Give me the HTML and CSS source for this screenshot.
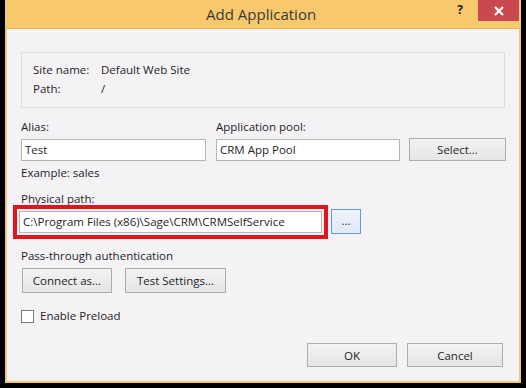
FILE: index.html
```html
<!DOCTYPE html>
<html lang="en">
<head>
<meta charset="UTF-8">
<title>Add Application</title>
<link rel="stylesheet" href="styles.css">
</head>
<body>
<div class="window">
  <!-- Title Bar -->
  <div class="titlebar">
    <span class="title">Add Application</span>
    <span class="help">?</span>
    <span class="close">
      <svg width="12" height="10" viewBox="0 0 12 10"><path d="M2 1 L10 9 M10 1 L2 9" stroke="#fff" stroke-width="2.2"/></svg>
    </span>
  </div>

  <div class="content">
    <!-- Site Info -->
    <div class="site-box">
      <div class="site-row"><span class="key">Site name:</span><span>Default Web Site</span></div>
      <div class="site-row"><span class="key">Path:</span><span>/</span></div>
    </div>

    <!-- Alias / Pool -->
    <div class="alias-grid">
      <label class="label">Alias:</label>
      <label class="label">Application pool:</label>
      <span></span>
      <div class="input">Test</div>
      <div class="input">CRM App Pool</div>
      <button class="btn">Select...</button>
    </div>
    <div class="hint">Example: sales</div>

    <!-- Physical Path -->
    <div class="label path-label">Physical path:</div>
    <div class="path-row">
      <div class="highlight">
        <div class="input">C:\Program Files (x86)\Sage\CRM\CRMSelfService</div>
      </div>
      <button class="btn browse">...</button>
    </div>

    <div class="label auth-label">Pass-through authentication</div>
    <div class="auth-row">
      <button class="btn connect">Connect as...</button>
      <button class="btn test">Test Settings...</button>
    </div>

    <label class="check-row"><span class="checkbox"></span>Enable Preload</label>

    <div class="footer">
      <button class="btn footer-btn ok">OK</button>
      <button class="btn footer-btn cancel">Cancel</button>
    </div>
  </div>
</div>
</body>
</html>
```

FILE: styles.css
```css
body {
  margin: 0;
  background: #000;
  font-family: 'Open Sans', 'Noto Sans', Arial, sans-serif;
  font-size: 11.5px;
  color: #1e1e1e;
  height: 388px;
  overflow: hidden;
}
.window {
  margin-left: 5px;
  width: 512px;
  height: 381px;
  background: #f5f2f6;
  border: 2px solid #f0c878;
  border-top: none;
  display: flex;
  flex-direction: column;
}
.titlebar {
  height: 28px;
  flex-shrink: 0;
  background: #f7c96c;
  border-bottom: 1px solid #e7b85b;
  display: flex;
  align-items: center;
}
.title {
  flex: 1;
  text-align: center;
  font-size: 15px;
  color: #3a3a3a;
  margin-left: 58px;
}
.help {
  font-weight: 700;
  font-size: 12px;
  color: #222;
  margin-right: 15px;
  align-self: flex-start;
  margin-top: 1px;
}
.close {
  align-self: flex-start;
  width: 41px;
  height: 21px;
  background: #c84a4f;
  display: flex;
  align-items: center;
  justify-content: center;
}
.content {
  padding: 23px 14px 0 14px;
  display: flex;
  flex-direction: column;
}
.site-box {
  height: 56px;
  box-sizing: border-box;
  border: 1px solid #dcdcdc;
  padding: 7px 0 0 11px;
}
.site-row {
  display: flex;
  line-height: 19px;
}
.site-row .key {
  width: 68px;
}
.label {
  line-height: 16px;
}
.alias-grid {
  display: grid;
  grid-template-columns: 185px 184px 96px;
  column-gap: 10px;
  row-gap: 3px;
  margin-top: 11px;
  align-items: end;
}
.alias-grid .btn {
  margin-left: -1px;
  height: 23px;
}
.input {
  height: 22px;
  box-sizing: border-box;
  border: 1px solid #b5b5b5;
  background: #fff;
  line-height: 20px;
  padding-left: 3px;
  white-space: nowrap;
  overflow: hidden;
}
.btn {
  font-family: inherit;
  font-size: 11.5px;
  color: #1e1e1e;
  background: linear-gradient(#f2f2f2, #e6e6e6);
  border: 1px solid #adadad;
  border-radius: 0;
  padding: 0;
  height: 25px;
}
.hint {
  margin-top: 4px;
  line-height: 16px;
}
.path-label {
  margin-top: 10px;
}
.path-row {
  display: flex;
  align-items: center;
  margin-left: -8px;
  margin-top: -2px;
}
.highlight {
  width: 315px;
  box-sizing: border-box;
  border: 4px solid #e3141e;
  padding: 2px;
}
.browse {
  width: 30px;
  height: 25px;
  margin-left: 3px;
  margin-top: -2px;
  border-color: #5f9ed8;
  background: linear-gradient(#eef4fb, #dfeaf6);
  line-height: 20px;
}
.auth-label {
  margin-top: 9px;
}
.auth-row {
  display: flex;
  gap: 13px;
  margin-top: 4px;
  margin-left: 1px;
}
.connect {
  width: 90px;
}
.test {
  width: 101px;
}
.check-row {
  display: flex;
  align-items: center;
  margin-top: 15px;
  line-height: 16px;
}
.checkbox {
  width: 11px;
  height: 11px;
  border: 1px solid #7a7a7a;
  background: #fff;
  margin-right: 6px;
}
.footer {
  display: flex;
  justify-content: flex-end;
  gap: 10px;
  margin-top: 19px;
  margin-right: 2px;
}
.footer-btn {
  height: 24px;
}
.ok {
  width: 90px;
}
.cancel {
  width: 96px;
}
```
